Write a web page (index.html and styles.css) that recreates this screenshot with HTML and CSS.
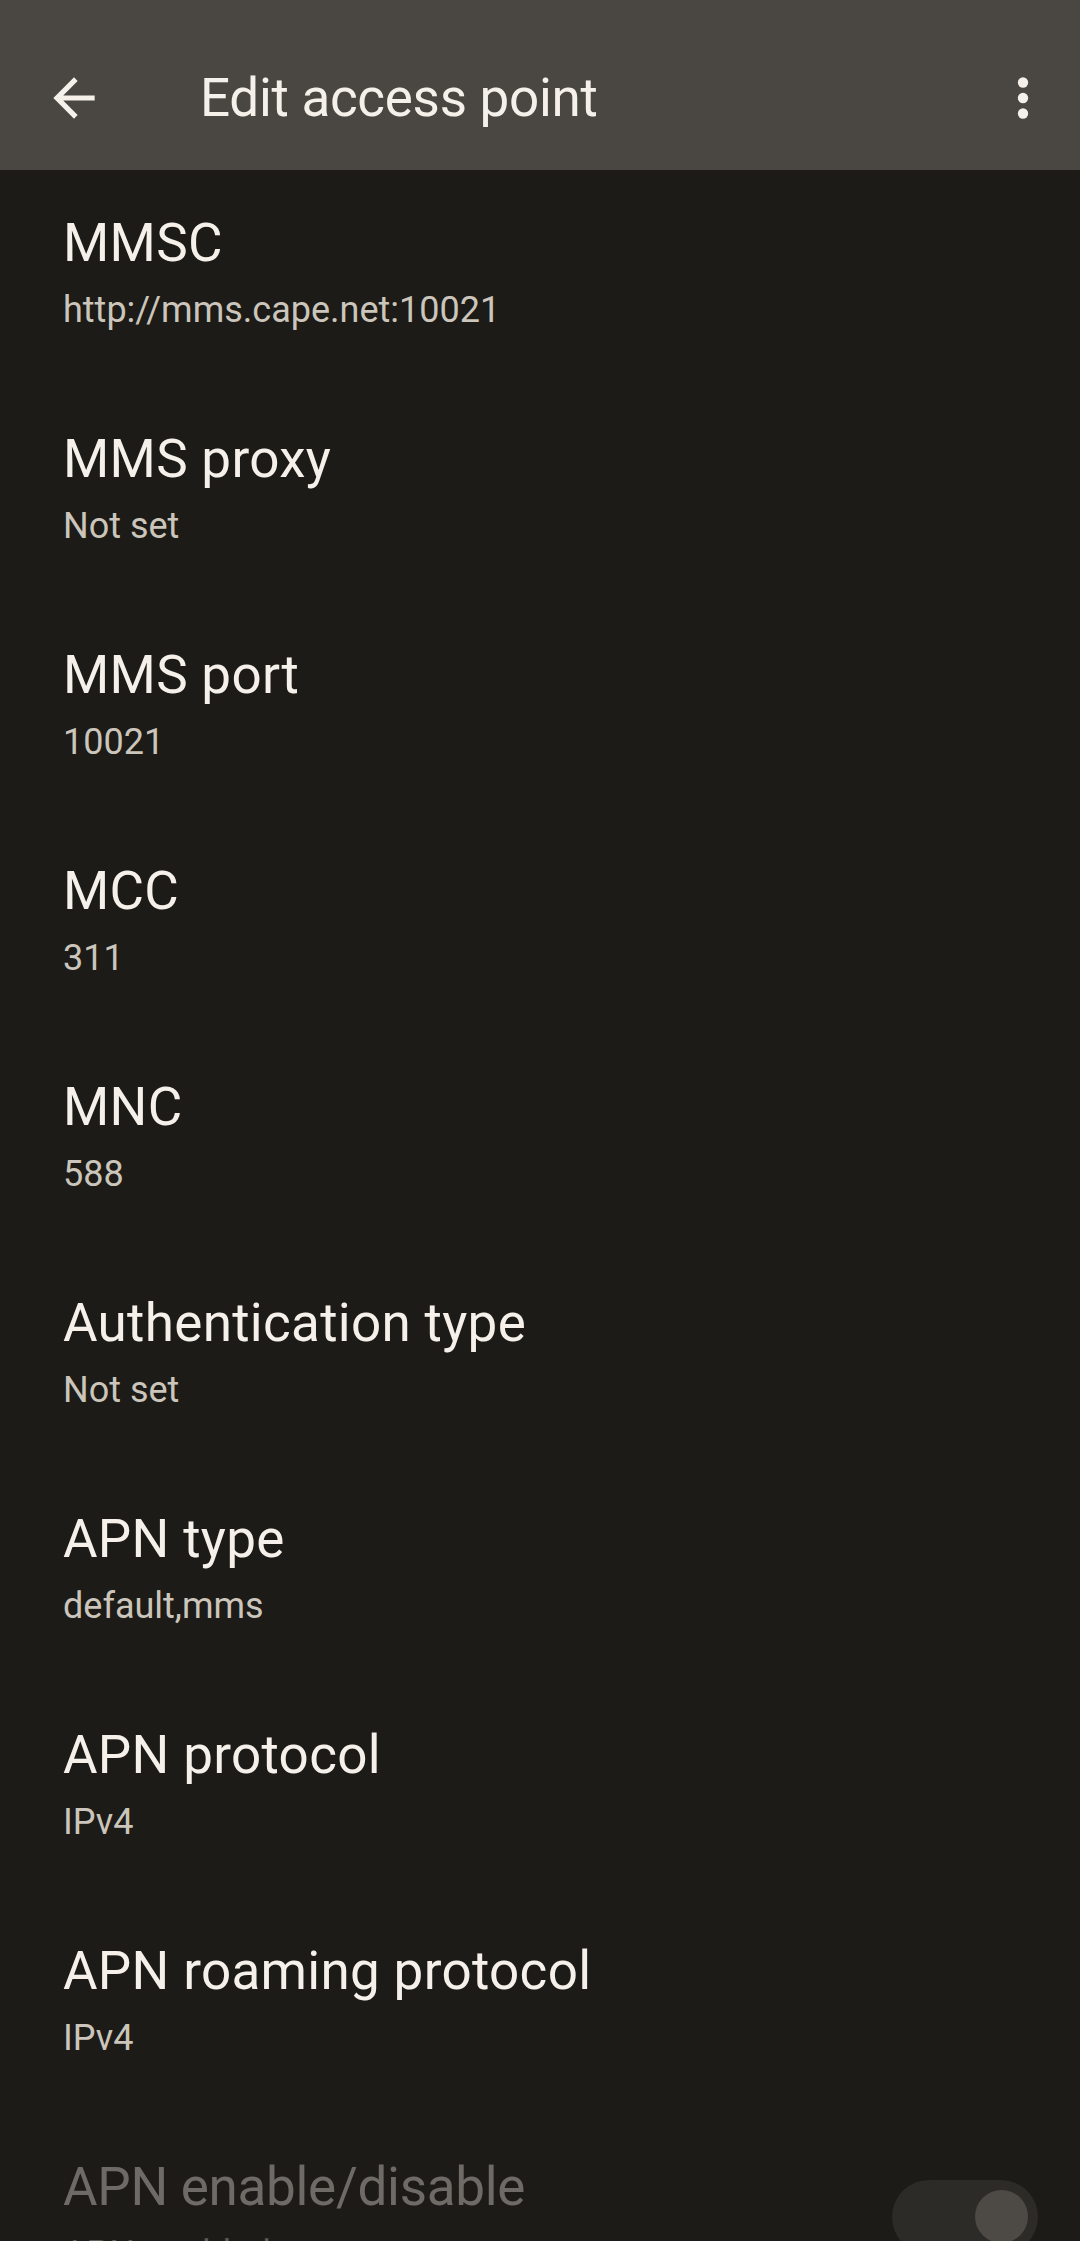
FILE: index.html
```html
<!DOCTYPE html>
<html lang="en">
<head>
  <meta charset="UTF-8" />
  <meta name="viewport" content="width=device-width, initial-scale=1.0" />
  <title>Edit access point</title>
  <link rel="stylesheet" href="styles.css">
</head>
<body>
  <header class="toolbar">
    <button class="icon-btn back-btn" aria-label="Navigate up">
      <svg viewBox="0 0 24 24" width="62" height="62"><path fill="#f6f0ea" d="M20 11H7.83l5.59-5.59L12 4l-8 8 8 8 1.41-1.41L7.83 13H20v-2z"/></svg>
    </button>
    <h1 class="toolbar-title">Edit access point</h1>
    <button class="icon-btn menu-btn" aria-label="More options">
      <svg viewBox="0 0 24 24" width="62" height="62"><circle cx="12" cy="6" r="2" fill="#f6f0ea"/><circle cx="12" cy="12" r="2" fill="#f6f0ea"/><circle cx="12" cy="18" r="2" fill="#f6f0ea"/></svg>
    </button>
  </header>

  <main class="prefs">
    <div class="pref">
      <div class="pref-text">
        <div class="pref-title">MMSC</div>
        <div class="pref-summary">http://mms.cape.net:10021</div>
      </div>
    </div>
    <div class="pref">
      <div class="pref-text">
        <div class="pref-title">MMS proxy</div>
        <div class="pref-summary">Not set</div>
      </div>
    </div>
    <div class="pref">
      <div class="pref-text">
        <div class="pref-title">MMS port</div>
        <div class="pref-summary">10021</div>
      </div>
    </div>
    <div class="pref">
      <div class="pref-text">
        <div class="pref-title">MCC</div>
        <div class="pref-summary">311</div>
      </div>
    </div>
    <div class="pref">
      <div class="pref-text">
        <div class="pref-title">MNC</div>
        <div class="pref-summary">588</div>
      </div>
    </div>
    <div class="pref">
      <div class="pref-text">
        <div class="pref-title">Authentication type</div>
        <div class="pref-summary">Not set</div>
      </div>
    </div>
    <div class="pref">
      <div class="pref-text">
        <div class="pref-title">APN type</div>
        <div class="pref-summary">default,mms</div>
      </div>
    </div>
    <div class="pref">
      <div class="pref-text">
        <div class="pref-title">APN protocol</div>
        <div class="pref-summary">IPv4</div>
      </div>
    </div>
    <div class="pref">
      <div class="pref-text">
        <div class="pref-title">APN roaming protocol</div>
        <div class="pref-summary">IPv4</div>
      </div>
    </div>
    <div class="pref disabled">
      <div class="pref-text">
        <div class="pref-title">APN enable/disable</div>
        <div class="pref-summary">APN enabled</div>
      </div>
      <div class="switch">
        <div class="switch-thumb"></div>
      </div>
    </div>
  </main>
</body>
</html>
```

FILE: styles.css
```css
body {
  margin: 0;
  padding: 0;
  background-color: #1c1b17;
  font-family: Roboto, "Noto Sans", Arial, sans-serif;
  color: #f6f0ea;
  overflow: hidden;
}
.toolbar {
  height: 170px;
  box-sizing: border-box;
  padding: 26px 26px 0 43px;
  background-color: #4a4742;
  display: flex;
  align-items: center;
}
.icon-btn {
  width: 62px;
  height: 62px;
  padding: 0;
  border: none;
  background: none;
  display: flex;
}
.toolbar-title {
  flex: 1;
  margin: 0 0 0 95px;
  font-size: 53px;
  line-height: 64px;
  font-weight: 400;
  letter-spacing: -0.3px;
  color: #f6f0ea;
}
.prefs {
  display: flex;
  flex-direction: column;
}
.pref {
  display: flex;
  align-items: center;
  padding: 41px 42px 52px 63px;
}
.pref-text {
  flex: 1;
}
.pref-title {
  font-size: 53px;
  line-height: 64px;
  letter-spacing: 0.3px;
  color: #f6f0ea;
}
.pref-summary {
  margin-top: 11px;
  font-size: 36px;
  line-height: 48px;
  color: #cbc5bb;
}
.pref.disabled .pref-title {
  color: #6e6b66;
  letter-spacing: -0.3px;
}
.pref.disabled .pref-summary {
  color: #5e5b56;
}
.switch {
  width: 146px;
  height: 74px;
  box-sizing: border-box;
  padding: 10px;
  border-radius: 37px;
  background-color: #2d2b27;
  display: flex;
  justify-content: flex-end;
  align-items: center;
}
.switch-thumb {
  width: 53px;
  height: 53px;
  border-radius: 50%;
  background-color: #4d4a45;
}
```
